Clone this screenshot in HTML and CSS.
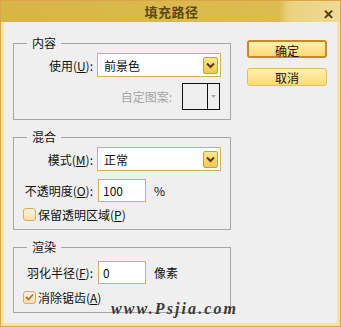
FILE: index.html
```html
<!DOCTYPE html>
<html lang="zh-CN">
<head>
    <meta charset="UTF-8">
    <title>填充路径</title>
    <link rel="stylesheet" href="styles.css">
</head>
<body>
    <div class="window">
        <div class="titlebar">
            <span class="title">填充路径</span>
            <span class="close">✕</span>
        </div>

        <div class="content">
            <div class="groups">
                <fieldset class="group g-content">
                    <legend>内容</legend>
                    <div class="row">
                        <label class="lbl">使用(<u>U</u>):</label>
                        <div class="select">
                            <span>前景色</span>
                            <span class="arrow"><svg width="9" height="7" viewBox="0 0 9 7"><path d="M1 1.5 L4.5 5 L8 1.5" fill="none" stroke="#5a3c08" stroke-width="2"/></svg></span>
                        </div>
                    </div>
                    <div class="row pattern-row">
                        <label class="lbl wide disabled">自定图案:</label>
                        <div class="pattern">
                            <span class="swatch"></span>
                            <span class="drop"><svg width="5" height="3" viewBox="0 0 5 3"><path d="M0 0 H5 L2.5 3 Z" fill="#a8a8a8"/></svg></span>
                        </div>
                    </div>
                </fieldset>

                <fieldset class="group g-blend">
                    <legend>混合</legend>
                    <div class="row">
                        <label class="lbl">模式(<u>M</u>):</label>
                        <div class="select">
                            <span>正常</span>
                            <span class="arrow"><svg width="9" height="7" viewBox="0 0 9 7"><path d="M1 1.5 L4.5 5 L8 1.5" fill="none" stroke="#5a3c08" stroke-width="2"/></svg></span>
                        </div>
                    </div>
                    <div class="row row-input">
                        <label class="lbl">不透明度(<u>O</u>):</label>
                        <div class="field">100</div>
                        <span class="unit">%</span>
                    </div>
                    <div class="check-row">
                        <span class="box"></span>
                        <span>保留透明区域(<u>P</u>)</span>
                    </div>
                </fieldset>

                <fieldset class="group g-render">
                    <legend>渲染</legend>
                    <div class="row row-input">
                        <label class="lbl">羽化半径(<u>F</u>):</label>
                        <div class="field">0</div>
                        <span class="unit">像素</span>
                    </div>
                    <div class="check-row">
                        <span class="box checked"><svg width="9" height="8" viewBox="0 0 9 8"><path d="M1 4 L3.5 6.5 L8 1.5" fill="none" stroke="#a87a36" stroke-width="1.8"/></svg></span>
                        <span>消除锯齿(<u>A</u>)</span>
                    </div>
                </fieldset>
            </div>

            <div class="buttons">
                <button class="btn default">确定</button>
                <button class="btn">取消</button>
            </div>

            <div class="watermark">www.Psjia.com</div>
        </div>
    </div>
</body>
</html>
```

FILE: styles.css
```css
*{
    margin: 0;
    padding: 0;
    box-sizing: border-box;
}

body{
    font-family: "Noto Sans CJK SC", "Liberation Sans", sans-serif;
    font-size: 12px;
    color: #111;
    background: #efefef;
}

.window{
    width: 341px;
    height: 327px;
    display: flex;
    flex-direction: column;
    border: 1px solid #dba54a;
    background: #f6e0a2;
    padding: 0 3px 3px 3px;
}

.titlebar{
    height: 21px;
    margin: 0 -3px;
    display: flex;
    align-items: center;
    justify-content: center;
    position: relative;
    background: linear-gradient(to right, #d7b646 0%, #dcbc50 82%, #ead27f 85%, #efda95 100%);
}

.title{
    font-size: 13px;
    font-weight: bold;
    color: #5b4916;
    letter-spacing: 0.5px;
    margin-left: 2px;
}

.close{
    position: absolute;
    right: 6px;
    top: 3px;
    font-size: 13px;
    font-weight: bold;
    color: #4a3a10;
}

.content{
    flex: 1;
    display: flex;
    position: relative;
    background: #efefef;
    padding: 14px 0 0 9px;
}

.groups{
    width: 218px;
    display: flex;
    flex-direction: column;
    gap: 10px;
}

.group{
    border: 1px solid #a6a6a6;
    padding: 0 0 8px 0;
}

.group legend{
    margin-left: 13px;
    padding: 0 5px;
    line-height: 14px;
    height: 14px;
}

.row{
    display: flex;
    align-items: center;
}

.lbl{
    width: 79px;
    text-align: right;
    margin-right: 4px;
    white-space: nowrap;
}

.lbl.wide{
    width: 158px;
    margin-right: 10px;
}

.disabled{
    color: #a5a5a5;
}

.g-content .row:first-of-type,
.g-blend .row:first-of-type{
    margin-top: 3px;
}

.select{
    width: 124px;
    height: 24px;
    border: 1px solid #dcae5c;
    background: #fff;
    display: flex;
    align-items: center;
    justify-content: space-between;
    padding: 0 2px 0 6px;
}

.arrow{
    width: 15px;
    height: 17px;
    border: 1px solid #cc9c3e;
    border-radius: 2px;
    background: linear-gradient(#fde68a, #f2c84e);
    display: flex;
    align-items: center;
    justify-content: center;
}

.pattern-row{
    margin-top: 6px;
}

.pattern{
    width: 38px;
    height: 27px;
    border: 1px solid #111;
    display: flex;
}

.swatch{
    width: 25px;
    border-right: 1px solid #111;
}

.drop{
    flex: 1;
    display: flex;
    align-items: center;
    justify-content: center;
}

.g-content{
    padding-bottom: 9px;
}

.row-input{
    margin-top: 8px;
}

.g-render .row-input{
    margin-top: 7px;
}

.field{
    width: 48px;
    height: 23px;
    margin-left: 1px;
    border: 1px solid #dcae5c;
    background: #fff;
    padding-left: 4px;
    line-height: 21px;
}

.unit{
    margin-left: 8px;
}

.check-row{
    display: flex;
    align-items: center;
    gap: 2px;
    margin: 5px 0 0 9px;
    height: 14px;
}

.g-render .check-row{
    margin-top: 6px;
}

.box{
    width: 13px;
    height: 13px;
    border: 1px solid #d5ac66;
    border-radius: 3px;
    background: linear-gradient(#fdf0d8, #f8dfb0);
    display: flex;
    align-items: center;
    justify-content: center;
}

.buttons{
    margin: 4px 0 0 16px;
    display: flex;
    flex-direction: column;
    gap: 10px;
}

.btn{
    width: 80px;
    height: 18px;
    font-family: inherit;
    font-size: 12px;
    color: #111;
    border: 1px solid #e2bd62;
    border-radius: 3px;
    background: linear-gradient(#fff0b0, #fcd976);
}

.btn.default{
    border: 2px solid #c8892a;
}

.watermark{
    position: absolute;
    left: 107px;
    top: 278px;
    font-family: "Liberation Serif", serif;
    font-style: italic;
    font-weight: bold;
    font-size: 16px;
    letter-spacing: 2.1px;
    color: #3a3a3a;
}
```
